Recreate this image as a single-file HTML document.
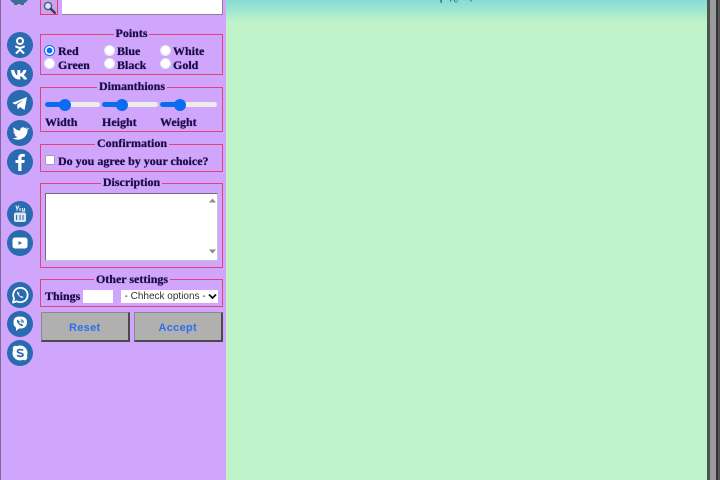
<!DOCTYPE html>
<html><head><meta charset="utf-8"><style>
html,body{margin:0;padding:0;width:720px;height:480px;overflow:hidden;background:#cfa6fb}
body{position:relative;font:bold 12px "Liberation Serif",serif;color:#1a0b48}
.a{position:absolute}
.fs{position:absolute;left:40px;width:181px;border:1.500px solid #e4407a;box-sizing:content-box}
.lg{position:absolute;background:#cfa6fb;text-align:center;font-size:12px;line-height:12px;height:12px;white-space:nowrap;text-shadow:0 0 .6px #1a0b48}
.t{position:absolute;line-height:14px;white-space:nowrap;text-shadow:0 0 .6px #1a0b48}
.r{position:absolute;margin:0;width:11px;height:11px;appearance:none;-webkit-appearance:none;box-sizing:border-box;background:#fff;border:1px solid #e8e2f0;border-radius:50%}
.r:checked{border:1.500px solid #0a6cf0;background:radial-gradient(circle,#0a6cf0 0,#0a6cf0 2.600px,#fff 3.100px)}
.c{position:absolute;left:6.500px;width:26px;height:26px;border-radius:50%;background:#2a6ab0}
.c svg{position:absolute;left:0;top:0;width:26px;height:26px}
.tr{position:absolute;height:5px;top:102px;background:#ececec;border-radius:3px}
.fi{position:absolute;height:5px;top:102px;background:#0a6cf0;border-radius:3px}
.th{position:absolute;width:12px;height:12px;top:98.500px;background:#0a6cf0;border-radius:50%}
.btn{position:absolute;top:312px;width:89.500px;height:30px;box-sizing:border-box;background:#b0b0b0;border-style:solid;border-width:1px 2px 2px 1px;border-color:#8a8a8a #4a4a4a #4a4a4a #8a8a8a;color:#2f6fe8;font:bold 11px/31px "Liberation Sans",sans-serif;text-align:center;letter-spacing:.3px}
.m{position:absolute;top:-8.500px;font:bold 10px/12px "Liberation Serif",serif;color:#3a6468;white-space:nowrap;overflow:hidden}
</style></head><body>
<div class="a" style="left:0;top:0;width:1px;height:480px;background:#7d6a99"></div>

<div class="a" style="left:226px;top:0;width:481px;height:480px;background:#bff2c8"></div>
<div class="a" style="left:226px;top:0;width:481px;height:22px;background:linear-gradient(#85dcd6,#bff2c8)"></div>
<div class="m" style="left:228px;width:25px">Главная</div>
<div class="m" style="left:320px;width:47px">О компании</div>
<div class="m" style="left:432px;width:43px">Продукция</div>
<div class="m" style="left:536px;width:57px">Новости сайта</div>
<div class="m" style="left:647px;width:50px">Контакты сайта</div>

<div class="a" style="left:707px;top:0;width:3px;height:480px;background:#4d5550"></div>
<div class="a" style="left:710px;top:0;width:6px;height:480px;background:#9a9a9a"></div>
<div class="a" style="left:716px;top:0;width:2px;height:480px;background:#333"></div>
<div class="a" style="left:718px;top:0;width:2px;height:480px;background:#555"></div>

<svg class="a" style="left:9px;top:0" width="20" height="6" viewBox="0 0 20 6"><path d="M1 0h18l-3 3h-1v2h-3l-1-1h-2l-1 1H5V3H4z" fill="#3d6d94"/></svg>

<div class="a" style="left:40px;top:-2px;width:16px;height:15px;border:1.500px solid #e8386f;background:#c9a3ef"></div>
<svg class="a" style="left:42px;top:0" width="15" height="15" viewBox="0 0 15 15"><circle cx="6" cy="6" r="3.600" fill="#d6e6f5" stroke="#50608a" stroke-width="1.500"/><path d="M8.800 8.800l4 4" stroke="#333a55" stroke-width="2.400" stroke-linecap="round"/></svg>
<div class="a" style="left:62px;top:-2px;width:161px;height:17px;box-sizing:border-box;background:#fff;border-right:1px solid #8b7d9c;border-bottom:1px solid #8b7d9c"></div>

<div class="c" style="top:32px"><svg viewBox="0 0 26 26"><circle cx="13" cy="9" r="3" fill="none" stroke="#fff" stroke-width="2"/><path d="M9 14.500c2.500 1.600 5.500 1.600 8 0M13 16v2M13 17.500l-3.500 3.500M13 17.500l3.500 3.500" fill="none" stroke="#fff" stroke-width="2" stroke-linecap="round"/></svg></div>
<div class="c" style="top:61px"><svg viewBox="0 0 26 26"><path d="M4 9h3.300c.5 3 1.800 5 3 5.500V9h3v3.600c1.300-.3 2.600-1.800 3.200-3.600h3c-.5 2.400-2 4.200-3 5 1.200.7 2.800 2.200 3.700 4.500h-3.300c-.7-1.800-2.200-3.200-3.600-3.400v3.400h-.9C8 18.500 4.400 15 4 9z" fill="#fff"/></svg></div>
<div class="c" style="top:90px"><svg viewBox="0 0 26 26"><path d="M5 13l15-6-2.500 13-4.500-3-2.300 2.400-.7-4.400 6.500-5.500-8 5z" fill="#fff"/></svg></div>
<div class="c" style="top:119.500px"><svg viewBox="0 0 26 26"><path d="M20.500 8.500c-.6.300-1.200.4-1.800.5.600-.4 1.100-1 1.300-1.700-.6.400-1.300.6-2 .8-1.900-2-5.400-.3-4.800 2.500-2.600-.1-4.900-1.400-6.400-3.300-.9 1.500-.4 3.400 1 4.300-.5 0-1-.2-1.400-.4 0 1.600 1.100 2.900 2.600 3.300-.5.100-1 .1-1.500 0 .4 1.300 1.600 2.200 3 2.300-1.400 1.100-3 1.500-4.800 1.300 6.500 4.100 15.200-.4 14.800-8.400.7-.4 1.400-1 2-1.700z" fill="#fff"/></svg></div>
<div class="c" style="top:148.500px"><svg viewBox="0 0 26 26"><path d="M14.500 22v-8h2.800l.4-3h-3.200V9.200c0-.9.300-1.500 1.600-1.500h1.700V5c-.8-.1-1.600-.1-2.500-.1-2.500 0-4.100 1.500-4.100 4.100V11H8.500v3h2.700v8z" fill="#fff"/></svg></div>
<div class="c" style="top:200.500px"><svg viewBox="0 0 26 26"><path d="M9 4.500l1 3v2M12 4.500l-1.500 3M13 7v3M15.500 7v3h2V7" fill="none" stroke="#dfe6f2" stroke-width="1.200"/><rect x="7" y="11.500" width="12" height="9.500" rx="2" fill="#dfe6f2"/><path d="M9.500 14v5M13 14v5M16 14v5" stroke="#2a6ab0" stroke-width="1"/></svg></div>
<div class="c" style="top:230px"><svg viewBox="0 0 26 26"><rect x="5.500" y="7.500" width="15" height="11" rx="2.500" fill="#fff"/><path d="M11.500 11l3.500 2-3.500 2z" fill="#2a6ab0"/></svg></div>
<div class="c" style="top:281.500px"><svg viewBox="0 0 26 26"><path d="M6 20.500l1.100-4a7.200 7.200 0 1 1 2.800 2.800z" fill="none" stroke="#fff" stroke-width="1.800" stroke-linejoin="round"/><path d="M10.500 9.500c-1 1 0 3 1.500 4.500s3.500 2.500 4.500 1.500l-1.500-1.500-1 .5c-1-.5-1.500-1-2-2l.5-1z" fill="#fff"/></svg></div>
<div class="c" style="top:311px"><svg viewBox="0 0 26 26"><path d="M13 5.500c-4 0-6.500 1.500-6.500 5.500 0 2.700.7 4.500 2.500 5.500v3.500l3-2.500c5 .3 8-1.500 8-6.500 0-4-3-5.500-7-5.500z" fill="#fff"/><path d="M10.500 9c-.8.800 0 2.600 1.500 4s3 2.200 3.800 1.500l-1.300-1.500-1 .4c-.8-.4-1.300-1-1.600-1.800l.5-1zM13.500 8.500c1.800 0 3.200 1.400 3.200 3.200M13.500 10.200c.8 0 1.500.7 1.500 1.500" fill="#2a6ab0" stroke="#2a6ab0" stroke-width=".6"/></svg></div>
<div class="c" style="top:340px"><svg viewBox="0 0 26 26"><circle cx="13" cy="13" r="7.500" fill="#fff"/><circle cx="8.500" cy="8.500" r="2.800" fill="#fff"/><circle cx="17.500" cy="17.500" r="2.800" fill="#fff"/><path d="M16 10.500c-1-1.200-5.500-1.500-5.500.7 0 2.500 5.500 1.300 5.500 3.700 0 2-4.500 1.800-5.800.3" fill="none" stroke="#2a6ab0" stroke-width="1.700"/></svg></div>

<div class="fs" style="top:34px;height:39px"></div>
<div class="lg" style="left:114px;top:27px;width:35px">Points</div>
<input class="r" type="radio" checked style="left:44px;top:45px">
<input class="r" type="radio" style="left:103.500px;top:45px">
<input class="r" type="radio" style="left:159.500px;top:45px">
<input class="r" type="radio" style="left:44px;top:58px">
<input class="r" type="radio" style="left:103.500px;top:58px">
<input class="r" type="radio" style="left:159.500px;top:58px">
<div class="t" style="left:58px;top:44px">Red</div>
<div class="t" style="left:117px;top:44px">Blue</div>
<div class="t" style="left:173px;top:44px">White</div>
<div class="t" style="left:58px;top:58px">Green</div>
<div class="t" style="left:117px;top:58px">Black</div>
<div class="t" style="left:173px;top:58px">Gold</div>

<div class="fs" style="top:87px;height:43px"></div>
<div class="lg" style="left:97px;top:80px;width:70px">Dimanthions</div>
<div class="tr" style="left:45px;width:55px"></div><div class="fi" style="left:45px;width:19px"></div><div class="th" style="left:58.500px"></div>
<div class="tr" style="left:102px;width:56px"></div><div class="fi" style="left:102px;width:19px"></div><div class="th" style="left:115.500px"></div>
<div class="tr" style="left:160px;width:57px"></div><div class="fi" style="left:160px;width:20px"></div><div class="th" style="left:174px"></div>
<div class="t" style="left:45px;top:115px">Width</div>
<div class="t" style="left:102px;top:115px">Height</div>
<div class="t" style="left:160px;top:115px">Weight</div>

<div class="fs" style="top:144px;height:26px"></div>
<div class="lg" style="left:95px;top:137px;width:74px">Confirmation</div>
<div class="a" style="left:45px;top:154.500px;width:10px;height:10px;box-sizing:border-box;background:#fff;border:1px solid #a99bb8;border-radius:1.500px"></div>
<div class="t" style="left:58px;top:153.500px">Do you agree by your choice?</div>

<div class="fs" style="top:182.500px;height:83px"></div>
<div class="lg" style="left:101px;top:176px;width:61px">Discription</div>
<div class="a" style="left:45px;top:193px;width:173px;height:67.500px;box-sizing:border-box;background:#fff;border:1px solid;border-color:#75687f #c8c0d4 #c8c0d4 #75687f"></div>
<svg class="a" style="left:208px;top:196px" width="9" height="60" viewBox="0 0 9 60"><path d="M1 6.500l3.500-4 3.500 4zM1 53.500l3.500 4 3.500-4z" fill="#8a8a8a"/></svg>

<div class="fs" style="top:279px;height:26px"></div>
<div class="lg" style="left:94px;top:272.500px;width:76px">Other settings</div>
<div class="t" style="left:45px;top:289px">Things</div>
<div class="a" style="left:83px;top:290px;width:30px;height:13px;background:#fff"></div>
<div class="a" style="left:120.500px;top:290px;width:97.500px;height:12.500px;background:#fff;font:10px/13px 'Liberation Sans',sans-serif;color:#333;white-space:nowrap;overflow:hidden;padding-left:4px;box-sizing:border-box">- Chheck options -</div>
<svg class="a" style="left:208px;top:293px" width="9" height="7" viewBox="0 0 9 7"><path d="M1 1.500l3.500 3.500 3.500-3.500" fill="none" stroke="#111" stroke-width="1.800"/></svg>

<div class="btn" style="left:40.500px">Reset</div>
<div class="btn" style="left:133.500px">Accept</div>
</body></html>
